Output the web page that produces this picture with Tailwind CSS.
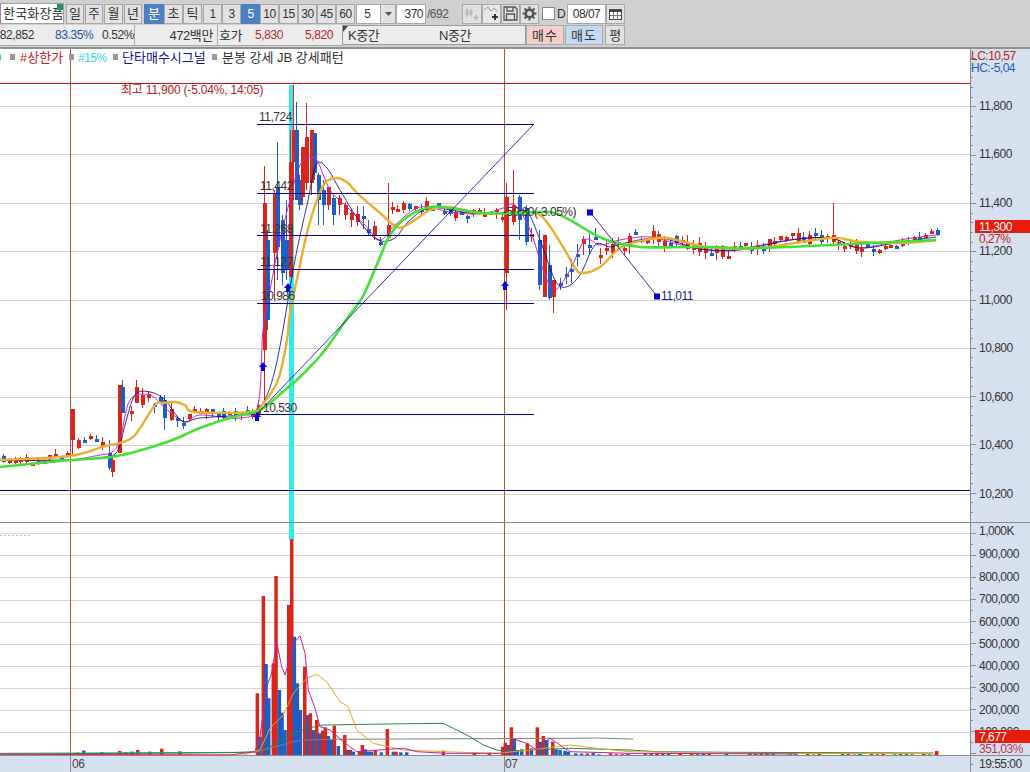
<!DOCTYPE html>
<html lang="ko">
<head>
<meta charset="utf-8">
<title>차트</title>
<script src="https://cdn.jsdelivr.net/npm/@tailwindcss/browser@4"></script>
</head>
<body class="w-[1030px] h-[772px] overflow-hidden bg-white font-['Liberation_Sans','Noto_Sans_CJK_KR',sans-serif] text-[12px] text-[#333]">

<header class="h-[49px] bg-[#d0d0d0] border-b-2 border-[#909090] overflow-hidden">
  <div class="h-[25px] flex items-center pt-[2px] text-[13px] leading-none">
    <div class="relative w-[66px] h-[21px] shrink-0 -ml-[2px] bg-white border border-[#a0a0a0] border-l-[3px] border-l-[#b070c8] flex items-center pl-[2px] overflow-hidden whitespace-nowrap tracking-[0.2px]">한국화장품<span class="absolute right-0 top-0 w-[6px] h-[6px] bg-[#2a9060]"></span></div>
    <div class="flex ml-[2px] gap-[1px]">
      <span class="w-[18px] h-[20px] flex items-center justify-center bg-[#e2e2e2] border border-[#a8a8a8]">일</span>
      <span class="w-[18px] h-[20px] flex items-center justify-center bg-[#e2e2e2] border border-[#a8a8a8]">주</span>
      <span class="w-[19px] h-[20px] flex items-center justify-center bg-[#e2e2e2] border border-[#a8a8a8]">월</span>
      <span class="w-[18px] h-[20px] flex items-center justify-center bg-[#e2e2e2] border border-[#a8a8a8]">년</span>
    </div>
    <div class="flex ml-[2px]">
      <span class="w-[20px] h-[20px] flex items-center justify-center bg-[#4d80c0] text-white border border-[#4d80c0]">분</span>
      <span class="w-[19px] h-[20px] flex items-center justify-center bg-[#e2e2e2] border border-[#a8a8a8]">초</span>
      <span class="w-[19px] h-[20px] flex items-center justify-center bg-[#e2e2e2] border border-[#a8a8a8]">틱</span>
    </div>
    <div class="flex ml-[1px] text-[12px] tracking-[-0.5px]">
      <span class="w-[19px] h-[20px] flex items-center justify-center bg-[#e2e2e2] border border-[#a8a8a8]">1</span>
      <span class="w-[19px] h-[20px] flex items-center justify-center bg-[#e2e2e2] border border-[#a8a8a8]">3</span>
      <span class="w-[19px] h-[20px] flex items-center justify-center bg-[#4d80c0] text-white border border-[#4d80c0]">5</span>
      <span class="w-[19px] h-[20px] flex items-center justify-center bg-[#e2e2e2] border border-[#a8a8a8]">10</span>
      <span class="w-[19px] h-[20px] flex items-center justify-center bg-[#e2e2e2] border border-[#a8a8a8]">15</span>
      <span class="w-[19px] h-[20px] flex items-center justify-center bg-[#e2e2e2] border border-[#a8a8a8]">30</span>
      <span class="w-[19px] h-[20px] flex items-center justify-center bg-[#e2e2e2] border border-[#a8a8a8]">45</span>
      <span class="w-[19px] h-[20px] flex items-center justify-center bg-[#e2e2e2] border border-[#a8a8a8]">60</span>
    </div>
    <div class="ml-[1px] w-[40px] h-[20px] flex bg-white border border-[#a8a8a8] text-[12px]">
      <span class="flex-1 flex items-center justify-center pr-[2px]">5</span>
      <span class="w-[15px] bg-[#e2e2e2] border-l border-[#a8a8a8] flex items-center justify-center">
        <svg width="7" height="4" viewBox="0 0 7 4"><path d="M0 0H7L3.5 4Z" fill="#555"/></svg>
      </span>
    </div>
    <div class="w-[30px] h-[20px] flex items-center justify-end pr-[2px] bg-white border border-[#a8a8a8] text-[12px] tracking-[-0.5px]">370</div>
    <div class="ml-[1px] w-[35px] text-[12px] tracking-[-0.5px] text-[#555]">/692</div>
    <div class="flex">
      <span class="w-[20px] h-[20px] flex items-center justify-center bg-[#e2e2e2] border border-[#a8a8a8]">
        <svg width="16" height="14" viewBox="0 0 16 14"><path d="M3 1V11M7 2V10M2 3H4V8H2ZM6 3H8V8H6Z" stroke="#bbb" fill="#bbb"/><path d="M12 8V13M9.5 10.5H14.5" stroke="#bbb" stroke-width="2"/></svg>
      </span>
      <span class="w-[19px] h-[20px] flex items-center justify-center bg-[#e8e8e8] border border-[#a8a8a8]">
        <svg width="17" height="15" viewBox="0 0 17 15"><path d="M1 4L5 1L8 5L11 2L15 6" stroke="#999" fill="none"/><path d="M12 8V14M9 11H15" stroke="#333" stroke-width="2"/></svg>
      </span>
      <span class="w-[19px] h-[20px] flex items-center justify-center bg-[#e2e2e2] border border-[#a8a8a8]">
        <svg width="15" height="15" viewBox="0 0 15 15"><path d="M1 1H12L14 3V14H1Z M4 1V5H10V1 M3.500 14V8H11.500V14" fill="none" stroke="#555" stroke-width="1.300"/></svg>
      </span>
      <span class="w-[19px] h-[20px] flex items-center justify-center bg-[#e2e2e2] border border-[#a8a8a8]">
        <svg width="15" height="15" viewBox="0 0 15 15"><circle cx="7.500" cy="7.500" r="3.800" fill="none" stroke="#555" stroke-width="2.600"/><path d="M7.500 0.500V3M7.500 12V14.500M0.500 7.500H3M12 7.500H14.500M2.500 2.500L4.300 4.300M10.700 10.700L12.500 12.500M12.500 2.500L10.700 4.300M4.300 10.700L2.500 12.500" stroke="#555" stroke-width="2"/></svg>
      </span>
    </div>
    <span class="ml-[3px] w-[13px] h-[13px] bg-white border border-[#888]"></span>
    <span class="ml-[2px] w-[9px] text-[12px]">D</span>
    <div class="ml-[1px] w-[39px] h-[20px] flex items-center justify-center bg-white border border-[#a8a8a8] text-[12px] tracking-[-0.5px]">08/07</div>
    <span class="w-[19px] h-[20px] flex items-center justify-center bg-[#e2e2e2] border border-[#a8a8a8]">
      <svg width="13" height="12" viewBox="0 0 13 12"><rect x="0.500" y="1.500" width="12" height="10" fill="#fff" stroke="#444"/><rect x="0.500" y="1.500" width="12" height="2.500" fill="#444"/><path d="M4.500 4V11.500M8.500 4V11.500M1 7.500H12" stroke="#777"/></svg>
    </span>
  </div>
  <div class="h-[21px] flex items-stretch text-[12px] leading-none tracking-[-0.4px]">
    <div class="w-[134px] shrink-0 bg-[#ececec] border-b border-[#aaa] flex items-center overflow-hidden whitespace-nowrap">
      <span class="w-[46px] -ml-[12px] text-right text-[#333]">82,852</span>
      <span class="w-[36px] ml-[21px] text-[#2050a0]">83.35%</span>
      <span class="ml-[11px] text-[#333]">0.52%</span>
    </div>
    <div class="w-[83px] shrink-0 bg-[#ececec] border-l border-b border-[#aaa] flex items-center justify-end pr-[4px] text-[13px]">472백만</div>
    <div class="w-[125px] shrink-0 bg-[#ececec] border-l border-b border-[#aaa] flex items-center text-[13px]">
      <span class="ml-[1px] w-[36px]">호가</span>
      <span class="w-[36px] text-[#b03030] text-[12px]">5,830</span>
      <span class="ml-[14px] text-[#c02020] text-[12px]">5,820</span>
    </div>
    <div class="relative w-[184px] shrink-0 h-[20px] bg-[#ececec] border border-[#999] flex items-center text-[13px]">
      <span class="absolute left-0 top-0 w-0 h-0 border-t-[6px] border-r-[5px] border-t-[#444] border-r-transparent"></span>
      <span class="ml-[5px] w-[91px]">K중간</span>
      <span>N중간</span>
    </div>
    <span class="w-[38px] h-[20px] flex items-center justify-center bg-[#f4d0c8] border border-[#aaa] text-[13px] tracking-[1px]">매수</span>
    <span class="ml-[1px] w-[38px] h-[20px] flex items-center justify-center bg-[#c4daf2] border border-[#aaa] text-[13px] tracking-[1px]">매도</span>
    <span class="ml-[2px] w-[20px] h-[20px] flex items-center justify-center bg-[#e2e2e2] border border-[#a8a8a8] text-[13px]">평</span>
  </div>
</header>

<main class="flex h-[723px]">
  <svg id="chart" class="w-[970px] h-[723px] shrink-0 block" viewBox="0 49 970 723" xmlns="http://www.w3.org/2000/svg"></svg>
  <svg id="axis" class="w-[60px] h-[723px] shrink-0 block" viewBox="970 49 60 723" xmlns="http://www.w3.org/2000/svg">
    <rect x="970" y="49" width="60" height="723" fill="#d6e1f0"/>
    <g id="ticks"></g>
    <path d="M970.500 49V772" stroke="#8a8a8a"/>
    <path d="M970 522.500H1030M970 755.500H1030" stroke="#8a8a8a"/>
    <g font-size="12" letter-spacing="-0.5" fill="#333">
      <text x="971" y="60" fill="#c02020">LC:10,57</text>
      <text x="971" y="72" fill="#2060b0">HC:-5,04</text>
      <text x="979" y="110">11,800</text>
      <text x="979" y="158">11,600</text>
      <text x="979" y="207">11,400</text>
      <text x="979" y="255">11,200</text>
      <text x="979" y="304">11,000</text>
      <text x="979" y="352">10,800</text>
      <text x="979" y="401">10,600</text>
      <text x="979" y="449">10,400</text>
      <text x="979" y="498">10,200</text>
      <text x="979" y="535">1,000K</text>
      <text x="979" y="558">900,000</text>
      <text x="979" y="581">800,000</text>
      <text x="979" y="603">700,000</text>
      <text x="979" y="626">600,000</text>
      <text x="979" y="648">500,000</text>
      <text x="979" y="670">400,000</text>
      <text x="979" y="692">300,000</text>
      <text x="979" y="714">200,000</text>
      <rect x="975" y="220" width="55" height="13" fill="#e81c0c"/>
      <text x="979" y="231" fill="#fff">11,300</text>
      <text x="979" y="243" fill="#d02020">0,27%</text>
      <text x="979" y="736">100,000</text>
      <rect x="975" y="730" width="55" height="13" fill="#e81c0c"/>
      <text x="979" y="741" fill="#fff">7,677</text>
      <text x="979" y="753" fill="#c03040">351,03%</text>
      <text x="979" y="768">19:55:00</text>
    </g>
  </svg>
</main>

<script>
(function(){
var S='';
function poly(p,c,w){var s='';for(var i=0;i<p.length;i++)s+=p[i][0]+','+p[i][1]+' ';S+='<polyline points="'+s+'" fill="none" stroke="'+c+'" stroke-width="'+w+'" stroke-linejoin="round"/>';}
function curve(p,c,w){var d='M'+p[0][0]+' '+p[0][1];for(var i=0;i<p.length-1;i++){var a=p[Math.max(0,i-1)],b=p[i],e=p[i+1],f=p[Math.min(p.length-1,i+2)];
 d+='C'+(b[0]+(e[0]-a[0])/6).toFixed(1)+' '+(b[1]+(e[1]-a[1])/6).toFixed(1)+' '+(e[0]-(f[0]-b[0])/6).toFixed(1)+' '+(e[1]-(f[1]-b[1])/6).toFixed(1)+' '+e[0]+' '+e[1];}
 S+='<path d="'+d+'" fill="none" stroke="'+c+'" stroke-width="'+w+'"/>';}
function hl(y,x1,x2,c){S+='<path d="M'+x1+' '+(y+.5)+'H'+x2+'" stroke="'+c+'"/>';}
function vl(x,y1,y2,c){S+='<path d="M'+(x+.5)+' '+y1+'V'+y2+'" stroke="'+c+'"/>';}
function rc(x,y,w,h,c){S+='<rect x="'+x+'" y="'+y+'" width="'+w+'" height="'+h+'" fill="'+c+'"/>';}
var R='#dc2418',B='#1b5ec4';
var grid=[106,154,203,251,300,348,397,445,494,533,555,577,600,622,644,666,688,710,732];
grid.forEach(function(y){hl(y,0,970,'#d4d4d4');});
rc(289,85,5,455,'#33e8f0');
vl(70,49,755,'#c04a40');vl(504,49,755,'#c04a40');
hl(83,0,970,'#d01010');
hl(490,0,970,'#000080');
hl(522,0,970,'#8a8a8a');
var seed=7;function rnd(){seed=(seed*16807)%2147483647;return seed/2147483647;}
function lerp(p,x){for(var i=1;i<p.length;i++){if(x<=p[i][0]){var t=(x-p[i-1][0])/(p[i][0]-p[i-1][0]);return p[i-1][1]+t*(p[i][1]-p[i-1][1]);}}return p[p.length-1][1];}
var center=[[0,459],[30,461],[68,452],[85,437],[100,442],[112,450],[126,420],[135,397],[150,397],[165,408],[178,420],[200,411],[240,416],[254,410],[330,190],[345,208],[365,225],[380,238],[386,212],[400,208],[430,205],[450,212],[480,214],[500,214],[525,214],[535,245],[545,288],[555,295],[565,272],[580,250],[590,238],[600,250],[615,247],[640,236],[670,241],[700,249],[730,252],[760,245],[790,238],[830,238],[860,249],[890,246],[936,233]];
var amp=[[0,5],[70,6],[112,8],[130,14],[175,10],[195,6],[250,6],[330,16],[380,12],[395,7],[480,7],[520,8],[535,14],[590,14],[620,10],[700,9],[800,8],[936,6]];
var explicitC=[[71,409,455,409,440,R],[111,457,477,460,472,R],[108,440,470,453,468,B],[118,385,453,385,453,R],[121,380,413,387,413,B],[135,380,403,387,403,R],[163,395,430,400,418,B],
[257,400,417,405,414,R],[263,166,400,203,350,R],[266,230,330,240,320,B],[273,190,300,193,253,R],[276,142,280,188,247,B],[281,215,285,220,273,B],[285,200,280,240,270,B],[289,130,277,162,277,R],[292,85,200,130,162,R],[295,102,200,130,200,B],[298,175,210,180,205,B],[301,147,205,147,197,R],[305,103,190,137,183,R],[310,130,195,130,183,R],[313,133,180,133,173,B],[317,173,225,175,200,B],[322,180,225,190,205,B],[327,187,210,187,205,R],[332,195,225,198,215,B],[387,183,240,225,238,R],[505,183,310,197,273,R],[512,170,225,205,222,R],[518,195,240,197,220,B],[525,205,245,208,242,B],[538,230,290,240,285,B],[543,235,297,235,297,R],[548,245,300,265,298,B],[552,280,313,280,297,R],[832,203,245,235,242,R]];
for(var x=2;x<936;x+=5.8){
  var xx=Math.round(x);
  if(xx>254&&xx<334)continue;
  var skip=false;explicitC.forEach(function(c){if(Math.abs(c[0]-xx)<4)skip=true;});if(skip)continue;
  var c=lerp(center,x),a=lerp(amp,x);
  var o=c+(rnd()-.5)*a*1.4,e=c+(rnd()-.5)*a*1.4;
  var col=e<o?R:B;
  var yt=Math.min(o,e),yb=Math.max(o,e);
  vl(xx+1,(yt-rnd()*a*.8).toFixed(0),(yb+rnd()*a*.8).toFixed(0),col);
  rc(xx,yt.toFixed(0),4,Math.max(3,yb-yt).toFixed(0),col);
}
explicitC.forEach(function(c){vl(c[0]+1,c[1],c[2],c[5]);rc(c[0],c[3],4,c[4]-c[3],c[5]);});
curve([[0,459],[60,461],[100,455],[112,452],[120,440],[130,400],[150,395],[165,408],[185,422],[200,415],[240,418],[258,405],[263,330],[270,290],[280,240],[290,200],[300,165],[315,158],[330,190],[345,205],[365,225],[380,240],[395,225],[420,207],[450,212],[480,214],[503,208],[515,205],[530,230],[545,275],[555,290],[570,270],[585,240],[600,245],[620,240],[650,237],[690,247],[730,250],[790,240],[830,238],[860,248],[900,240],[936,235]],'#c828c8',1);
curve([[0,460],[60,460],[105,457],[118,450],[125,425],[135,395],[150,392],[165,400],[182,421],[200,418],[240,415],[258,410],[275,370],[295,260],[307,205],[316,165],[327,168],[340,190],[360,222],[378,240],[395,238],[408,222],[430,208],[470,213],[510,213],[527,212],[540,240],[555,280],[566,287],[580,275],[595,245],[610,247],[625,243],[660,238],[700,249],[740,250],[790,240],[830,238],[860,248],[900,242],[936,237]],'#000070',0.8);
curve([[0,460],[70,456],[105,446],[120,443],[135,435],[155,405],[163,403],[175,402],[185,405],[195,412],[250,412],[262,405],[278,380],[287,340],[290,313],[300,265],[307,233],[317,200],[325,183],[337,178],[348,183],[357,193],[380,213],[395,226],[403,227],[415,220],[430,210],[447,207],[480,213],[513,213],[540,215],[563,247],[575,268],[583,273],[600,267],[620,248],[640,241],[667,238],[707,247],[760,248],[830,238],[860,242],[900,243],[936,240]],'#e6b030',2.4);
curve([[0,467],[60,461],[117,456],[167,442],[200,428],[233,417],[260,410],[285,390],[305,372],[325,350],[346,320],[363,296],[378,262],[390,235],[407,217],[430,207],[450,208],[483,213],[520,213],[550,212],[570,220],[590,232],[610,241],[640,247],[700,247],[760,248],[830,245],[936,240]],'#44e034',2.6);
[124,193,235,269,303,414].forEach(function(y){hl(y,257,534,'#0000a0');});
S+='<path d="M257 414L534 124" stroke="#0000a0" stroke-width="0.8" fill="none"/>';
S+='<path d="M590 212L657 296" stroke="#0000a0" stroke-width="0.8" fill="none"/>';
rc(587,209.500,6,6,'#0000e0');rc(654,293.500,6,6,'#0000e0');
function arrow(x,y){S+='<path d="M'+x+' '+(y-5)+'L'+(x+4)+' '+y+'H'+(x+2)+'V'+(y+4)+'H'+(x-2)+'V'+y+'H'+(x-4)+'Z" fill="#0000e0"/>';}
arrow(263,367);arrow(288,288);arrow(505,286);arrow(257,417);
var b=[[82,520,R],[90,650,B],[100,228,R],[108,432,B],[116,535,B],[130,430,R],[138,168,R],[148,510,B],[156,578,B],[165,630,B],[176,255,R],[185,58,R],[193,350,B],[202,490,B],[211,570,B],[224,440,R],[233,585,B],[241,580,R],[250,630,B],[260,600,R],[268,640,B],[278,632,R],[286,622,R],[295,648,B],[304,660,B],[313,617,R],[325,678,B],[344,645,R],[352,690,B],[361,690,R],[370,695,B],[388,695,R],[397,675,R],[406,688,B],[415,695,B],[424,695,B],[436,690,R],[454,697,B],[472,627,R],[490,695,B],[498,695,R],[512,697,B],[530,697,B],[640,692,R],[733,698,R],[778,698,R],[818,680,R],[826,668,R],[835,675,B],[844,622,R],[853,655,B],[862,690,B],[875,688,B],[892,670,R],[904,685,B],[922,622,R],[931,665,B],[940,648,R],[950,660,B],[968,665,R],[978,688,B],[990,690,B],[1005,692,B],[1015,695,B]];
b.forEach(function(v){var xv=230+v[0]/3-1.7,yv=520+v[1]/3;rc(xv.toFixed(1),yv.toFixed(1),3.500,(755-yv).toFixed(1),v[2]);});
var small=[[76,R],[82,B],[100,B],[118,R],[124,R],[130,B],[136,R],[148,R],[160,R],[178,R]];
small.forEach(function(v){var h=2+rnd()*(v[0]>110&&v[0]<170?7:3);rc(v[0],(755-h).toFixed(1),3.500,h.toFixed(1),v[1]);});
for(var xv=574;xv<936;xv+=5.8){if(rnd()<.4)continue;var h=rnd()*1.500+0.5;rc(xv.toFixed(1),(755-h).toFixed(1),3.500,h.toFixed(1),rnd()>.5?R:B);}
rc(935,751,3.500,4,R);
hl(755,0,970,'#8a8a8a');
function z(p){return p.map(function(q){return [(230+q[0]/3).toFixed(1),(520+q[1]/3).toFixed(1)];});}
poly(z([[-690,700],[75,697],[190,665],[220,660],[300,658],[1020,655],[1100,654],[1210,657]]),'#808080',1);
poly(z([[-690,702],[-100,699],[0,698],[75,695],[120,680],[170,650],[230,625],[280,615],[470,612],[640,610],[670,625],[720,650],[760,675],[800,690],[830,695],[900,690],[1020,685],[1200,690],[1280,695],[1500,697],[2110,699]]),'#208848',1);
poly(z([[-690,704],[40,705],[90,690],[120,625],[160,585],[190,520],[230,475],[260,463],[290,485],[330,545],[355,560],[380,630],[430,670],[520,690],[640,695],[800,700],[900,690],[1020,675],[1100,685],[1200,695],[1500,700],[2110,701]]),'#e8a820',1);
poly(z([[-690,703],[0,705],[75,695],[90,650],[110,500],[125,460],[140,365],[155,440],[165,465],[175,430],[190,370],[210,347],[225,400],[235,510],[255,565],[270,620],[300,630],[340,665],[380,695],[520,685],[560,695],[650,700],[820,700],[860,660],[890,670],[920,690],[960,655],[1020,695],[1200,700],[1700,702]]),'#c020a8',1);
rc(0,756,970,16,'#d6e1f0');
vl(70,756,772,'#8a8a8a');vl(504,756,772,'#8a8a8a');
S+='<path d="M0 535.500H30" stroke="#bbb" stroke-dasharray="2 2"/>';
function sq(x){rc(x,54,5,6,'#999');}
sq(10);sq(69);sq(113);sq(212);
function tx(x,y,t,col,fs,ls){S+='<text x="'+x+'" y="'+y+'" fill="'+col+'" font-size="'+(fs||12)+'"'+(ls?' letter-spacing="'+ls+'"':'')+'>'+t+'</text>';}
tx(-6,62,'0','#20a020',13);
tx(20,62,'#상한가','#c02020',13);
tx(78,62,'#15%','#30d8e0',12,-0.5);
tx(122,62,'단타매수시그널','#1010a0',13);
tx(222,62,'분봉 강세 JB 강세패턴','#333',13);
tx(121,94,'최고 11,900 (-5.04%, 14:05)','#b02020',12,-0.2);
tx(259,121,'11,724','#333',12,-0.5);
tx(260,190,'11,442','#333',12,-0.5);
tx(260,233,'11,268','#333',12,-0.5);
tx(260,266,'11,127','#333',12,-0.5);
tx(261,300,'10,986','#333',12,-0.5);
tx(263,412,'10,530','#333',12,-0.5);
tx(503,216,'-50.80(-3.05%)','#333',12,-0.5);
tx(661,300,'11,011','#1a1a90',12,-0.5);
tx(72,768,'06','#444',12,-0.5);
tx(505,768,'07','#444',12,-0.5);
document.getElementById('chart').innerHTML=S;
var T='';
for(var i=0;i<80;i++){var y=58+i*9.66;if(y>520)break;var mj=Math.abs(((y-106.5)/48.3)-Math.round((y-106.5)/48.3))<0.02;T+='<path d="M970 '+y.toFixed(0)+'.5H'+(mj?976:973)+'" stroke="#8a8a8a"/>';}
for(var i=0;i<11;i++){var y=533+i*22;T+='<path d="M970 '+y+'.5H976M970 '+(y+11)+'.5H973" stroke="#8a8a8a"/>';}
document.getElementById('ticks').innerHTML=T;
})();
</script>
</body>
</html>
